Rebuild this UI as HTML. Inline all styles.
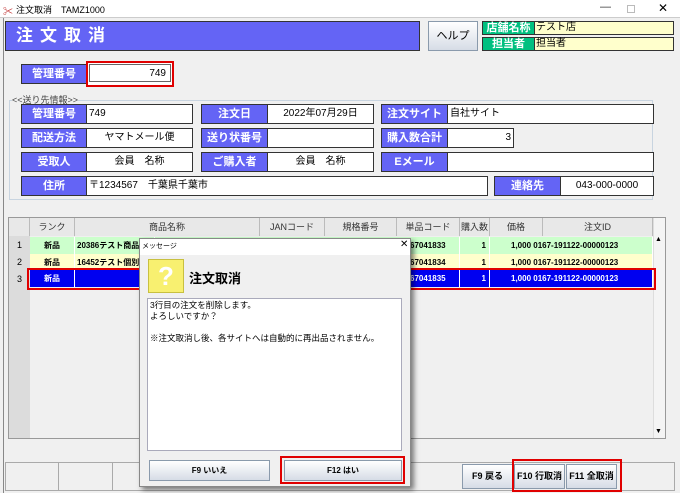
<!DOCTYPE html>
<html><head><meta charset="utf-8"><style>
*{box-sizing:border-box;margin:0;padding:0}
body{width:680px;height:493px;background:#f0f0f0;font-family:"Liberation Sans","Noto Sans CJK JP",sans-serif;font-size:10px;position:relative;overflow:hidden;color:#000}
.a{position:absolute}
.lbl{position:absolute;background:#6464f5;color:#fff;font-weight:bold;text-align:center;border:1px solid #333;font-size:11px;line-height:18px}
.fld{position:absolute;background:#fff;border:1px solid #333;font-size:10px;line-height:18px;padding:0 2px}
.g{position:absolute;background:#00c080;color:#fff;font-weight:bold;text-align:center;border:1px solid #333;font-size:11px;line-height:12px}
.y{position:absolute;background:#ffffcc;border:1px solid #333;font-size:10px;line-height:12px;padding-left:1px}
.th{position:absolute;top:218px;height:18px;line-height:18px;text-align:center;border-right:1px solid #bbb;background:#e8e8e8;color:#333;font-size:9px}
.c{position:absolute;height:17px;line-height:17px;font-size:8px;font-weight:bold;border-right:1px solid #fff;white-space:nowrap;overflow:hidden}
.btn{position:absolute;background:linear-gradient(#fff,#d6dce6);border:1px solid #8a9aac;font-size:9px;font-weight:bold;text-align:center}
</style></head><body>
<!-- title bar -->
<div class="a" style="left:0;top:0;width:680px;height:18px;background:#fff;border-bottom:1px solid #ccc"></div>
<div class="a" style="left:3px;top:3px;color:#c03030;font-size:10px">&#x2702;</div>
<div class="a" style="left:16px;top:3px;font-size:9px">注文取消　TAMZ1000</div>
<div class="a" style="left:600px;top:1px;font-size:11px;color:#333">&#8212;</div>
<div class="a" style="left:627px;top:5px;width:8px;height:8px;border:1px solid #bbb"></div>
<div class="a" style="left:658px;top:1px;font-size:12px">&#x2715;</div>
<div class="a" style="left:3px;top:18px;width:1px;height:475px;background:#888"></div>
<!-- header -->
<div class="a" style="left:5px;top:21px;width:415px;height:30px;background:#6464f5;border:1px solid #333;color:#fff;font-weight:bold;font-size:17px;line-height:28px;padding-left:10px;letter-spacing:7px">注文取消</div>
<div class="btn" style="left:428px;top:21px;width:50px;height:30px;line-height:28px;font-size:11px;font-weight:normal">ヘルプ</div>
<div class="g" style="left:482px;top:21px;width:53px;height:14px">店舗名称</div>
<div class="y" style="left:534px;top:21px;width:140px;height:14px">テスト店</div>
<div class="g" style="left:482px;top:37px;width:53px;height:14px">担当者</div>
<div class="y" style="left:534px;top:37px;width:140px;height:14px">担当者</div>
<!-- kanri -->
<div class="lbl" style="left:21px;top:64px;width:66px;height:20px">管理番号</div>
<div class="a" style="left:86px;top:61px;width:88px;height:26px;border:2px solid #e00000;background:#fff"><div style="border:1px solid #666;margin:1px;height:18px;text-align:right;padding-right:4px;line-height:17px;font-size:10px">749</div></div>
<div class="a" style="left:9px;top:100px;width:644px;height:100px;border:1px solid #c8d4e0"></div>
<div class="a" style="left:12px;top:93px;font-size:9px;color:#444;background:#f0f0f0">&lt;&lt;送り先情報&gt;&gt;</div>
<div class="lbl" style="left:21px;top:104px;width:66px;height:20px">管理番号</div><div class="fld" style="left:86px;top:104px;width:107px;height:20px">749</div>
<div class="lbl" style="left:201px;top:104px;width:67px;height:20px">注文日</div><div class="fld" style="left:267px;top:104px;width:107px;height:20px;text-align:center">2022年07月29日</div>
<div class="lbl" style="left:381px;top:104px;width:67px;height:20px">注文サイト</div><div class="fld" style="left:447px;top:104px;width:207px;height:20px">自社サイト</div>
<div class="lbl" style="left:21px;top:128px;width:66px;height:20px">配送方法</div><div class="fld" style="left:86px;top:128px;width:107px;height:20px;text-align:center">ヤマトメール便</div>
<div class="lbl" style="left:201px;top:128px;width:67px;height:20px">送り状番号</div><div class="fld" style="left:267px;top:128px;width:107px;height:20px"></div>
<div class="lbl" style="left:381px;top:128px;width:67px;height:20px">購入数合計</div><div class="fld" style="left:447px;top:128px;width:67px;height:20px;text-align:right">3</div>
<div class="lbl" style="left:21px;top:152px;width:66px;height:20px">受取人</div><div class="fld" style="left:86px;top:152px;width:107px;height:20px;text-align:center">会員　名称</div>
<div class="lbl" style="left:201px;top:152px;width:67px;height:20px">ご購入者</div><div class="fld" style="left:267px;top:152px;width:107px;height:20px;text-align:center">会員　名称</div>
<div class="lbl" style="left:381px;top:152px;width:67px;height:20px">Eメール</div><div class="fld" style="left:447px;top:152px;width:207px;height:20px"></div>
<div class="lbl" style="left:21px;top:176px;width:66px;height:20px">住所</div><div class="fld" style="left:86px;top:176px;width:402px;height:20px">〒1234567　千葉県千葉市</div>
<div class="lbl" style="left:494px;top:176px;width:67px;height:20px">連絡先</div><div class="fld" style="left:560px;top:176px;width:94px;height:20px;text-align:center">043-000-0000</div>
<!-- grid -->
<div class="a" style="left:8px;top:217px;width:658px;height:222px;border:1px solid #999;background:#f0f0f0"></div>
<div class="a" style="left:9px;top:218px;width:21px;height:220px;background:#dcdcdc"></div>
<div class="th" style="left:9px;width:21px"></div>
<div class="th" style="left:30px;width:45px">ランク</div>
<div class="th" style="left:75px;width:185px">商品名称</div>
<div class="th" style="left:260px;width:65px">JANコード</div>
<div class="th" style="left:325px;width:72px">規格番号</div>
<div class="th" style="left:397px;width:63px">単品コード</div>
<div class="th" style="left:460px;width:30px">購入数</div>
<div class="th" style="left:490px;width:53px">価格</div>
<div class="th" style="left:543px;width:110px">注文ID</div>
<div class="a" style="left:653px;top:218px;width:12px;height:220px;background:#f4f4f4;border-left:1px solid #ddd"></div>
<div class="a" style="left:655px;top:236px;font-size:7px">▲</div>
<div class="a" style="left:655px;top:428px;font-size:7px">▼</div>
<div class="a" style="left:9px;top:237px;width:21px;height:51px;font-size:9px;text-align:center;line-height:17px">1<br>2<br>3</div>
<div class="a" style="left:30px;top:237px;width:623px;height:17px;background:#ccffcc"></div>
<div class="a" style="left:30px;top:254px;width:623px;height:16px;background:#ffffcc"></div>
<div class="a" style="left:30px;top:270px;width:623px;height:17px;background:#0000f0"></div>
<div class="c" style="left:30px;top:237px;width:45px;text-align:center">新品</div>
<div class="c" style="left:75px;top:237px;width:80px;padding-left:2px">20386テスト商品_</div>
<div class="c" style="left:30px;top:254px;width:45px;text-align:center">新品</div>
<div class="c" style="left:75px;top:254px;width:80px;padding-left:2px">16452テスト個別</div>
<div class="c" style="left:30px;top:270px;width:45px;text-align:center;color:#fff">新品</div>
<div class="c" style="left:410px;top:237px;width:50px">67041833</div>
<div class="c" style="left:410px;top:254px;width:50px">67041834</div>
<div class="c" style="left:410px;top:270px;width:50px;color:#fff">67041835</div>
<div class="c" style="left:460px;top:237px;width:30px;text-align:right;padding-right:3px">1</div>
<div class="c" style="left:460px;top:254px;width:30px;text-align:right;padding-right:3px">1</div>
<div class="c" style="left:460px;top:270px;width:30px;text-align:right;padding-right:3px;color:#fff">1</div>
<div class="c" style="left:490px;top:237px;width:163px;padding-left:21px">1,000 0167-191122-00000123</div>
<div class="c" style="left:490px;top:254px;width:163px;padding-left:21px">1,000 0167-191122-00000123</div>
<div class="c" style="left:490px;top:270px;width:163px;padding-left:21px;color:#fff">1,000 0167-191122-00000123</div>
<div class="a" style="left:27px;top:268px;width:629px;height:22px;border:2px solid #e00000"></div>
<!-- bottom bar -->
<div class="a" style="left:5px;top:462px;width:670px;height:29px;border:1px solid #aaa;background:#f0f0f0"></div>
<div class="a" style="left:58px;top:462px;width:1px;height:29px;background:#aaa"></div>
<div class="a" style="left:112px;top:462px;width:1px;height:29px;background:#aaa"></div>
<div class="a" style="left:620px;top:462px;width:1px;height:29px;background:#aaa"></div>
<div class="btn" style="left:462px;top:464px;width:51px;height:25px;line-height:23px">F9 戻る</div>
<div class="btn" style="left:514px;top:464px;width:51px;height:25px;line-height:23px">F10 行取消</div>
<div class="btn" style="left:566px;top:464px;width:51px;height:25px;line-height:23px">F11 全取消</div>
<div class="a" style="left:512px;top:459px;width:110px;height:33px;border:2px solid #e00000"></div>
<!-- dialog -->
<div class="a" style="left:139px;top:238px;width:272px;height:249px;background:#f0f0f0;border:1px solid #888;box-shadow:3px 3px 5px rgba(0,0,0,.5)"></div>
<div class="a" style="left:140px;top:239px;width:270px;height:16px;background:#fff"></div>
<div class="a" style="left:142px;top:241px;font-size:7px">メッセージ</div>
<div class="a" style="left:400px;top:239px;font-size:10px">&#x2715;</div>
<div class="a" style="left:148px;top:259px;width:36px;height:34px;background:#f8f070;border:1px solid #c8c040;color:#fff;font-size:26px;font-weight:bold;text-align:center;line-height:32px">?</div>
<div class="a" style="left:189px;top:268px;font-size:13px;font-weight:bold">注文取消</div>
<div class="a" style="left:147px;top:298px;width:255px;height:153px;background:#fff;border:1px solid #aab;padding:1px 2px;font-size:8.5px;line-height:11px">3行目の注文を削除します。<br>よろしいですか？<br><br>※注文取消し後、各サイトへは自動的に再出品されません。</div>
<div class="btn" style="left:149px;top:460px;width:121px;height:21px;line-height:19px;font-size:8px">F9 いいえ</div>
<div class="btn" style="left:284px;top:460px;width:118px;height:21px;line-height:19px;font-size:8px">F12 はい</div>
<div class="a" style="left:280px;top:456px;width:125px;height:28px;border:2px solid #e00000"></div>
</body></html>
